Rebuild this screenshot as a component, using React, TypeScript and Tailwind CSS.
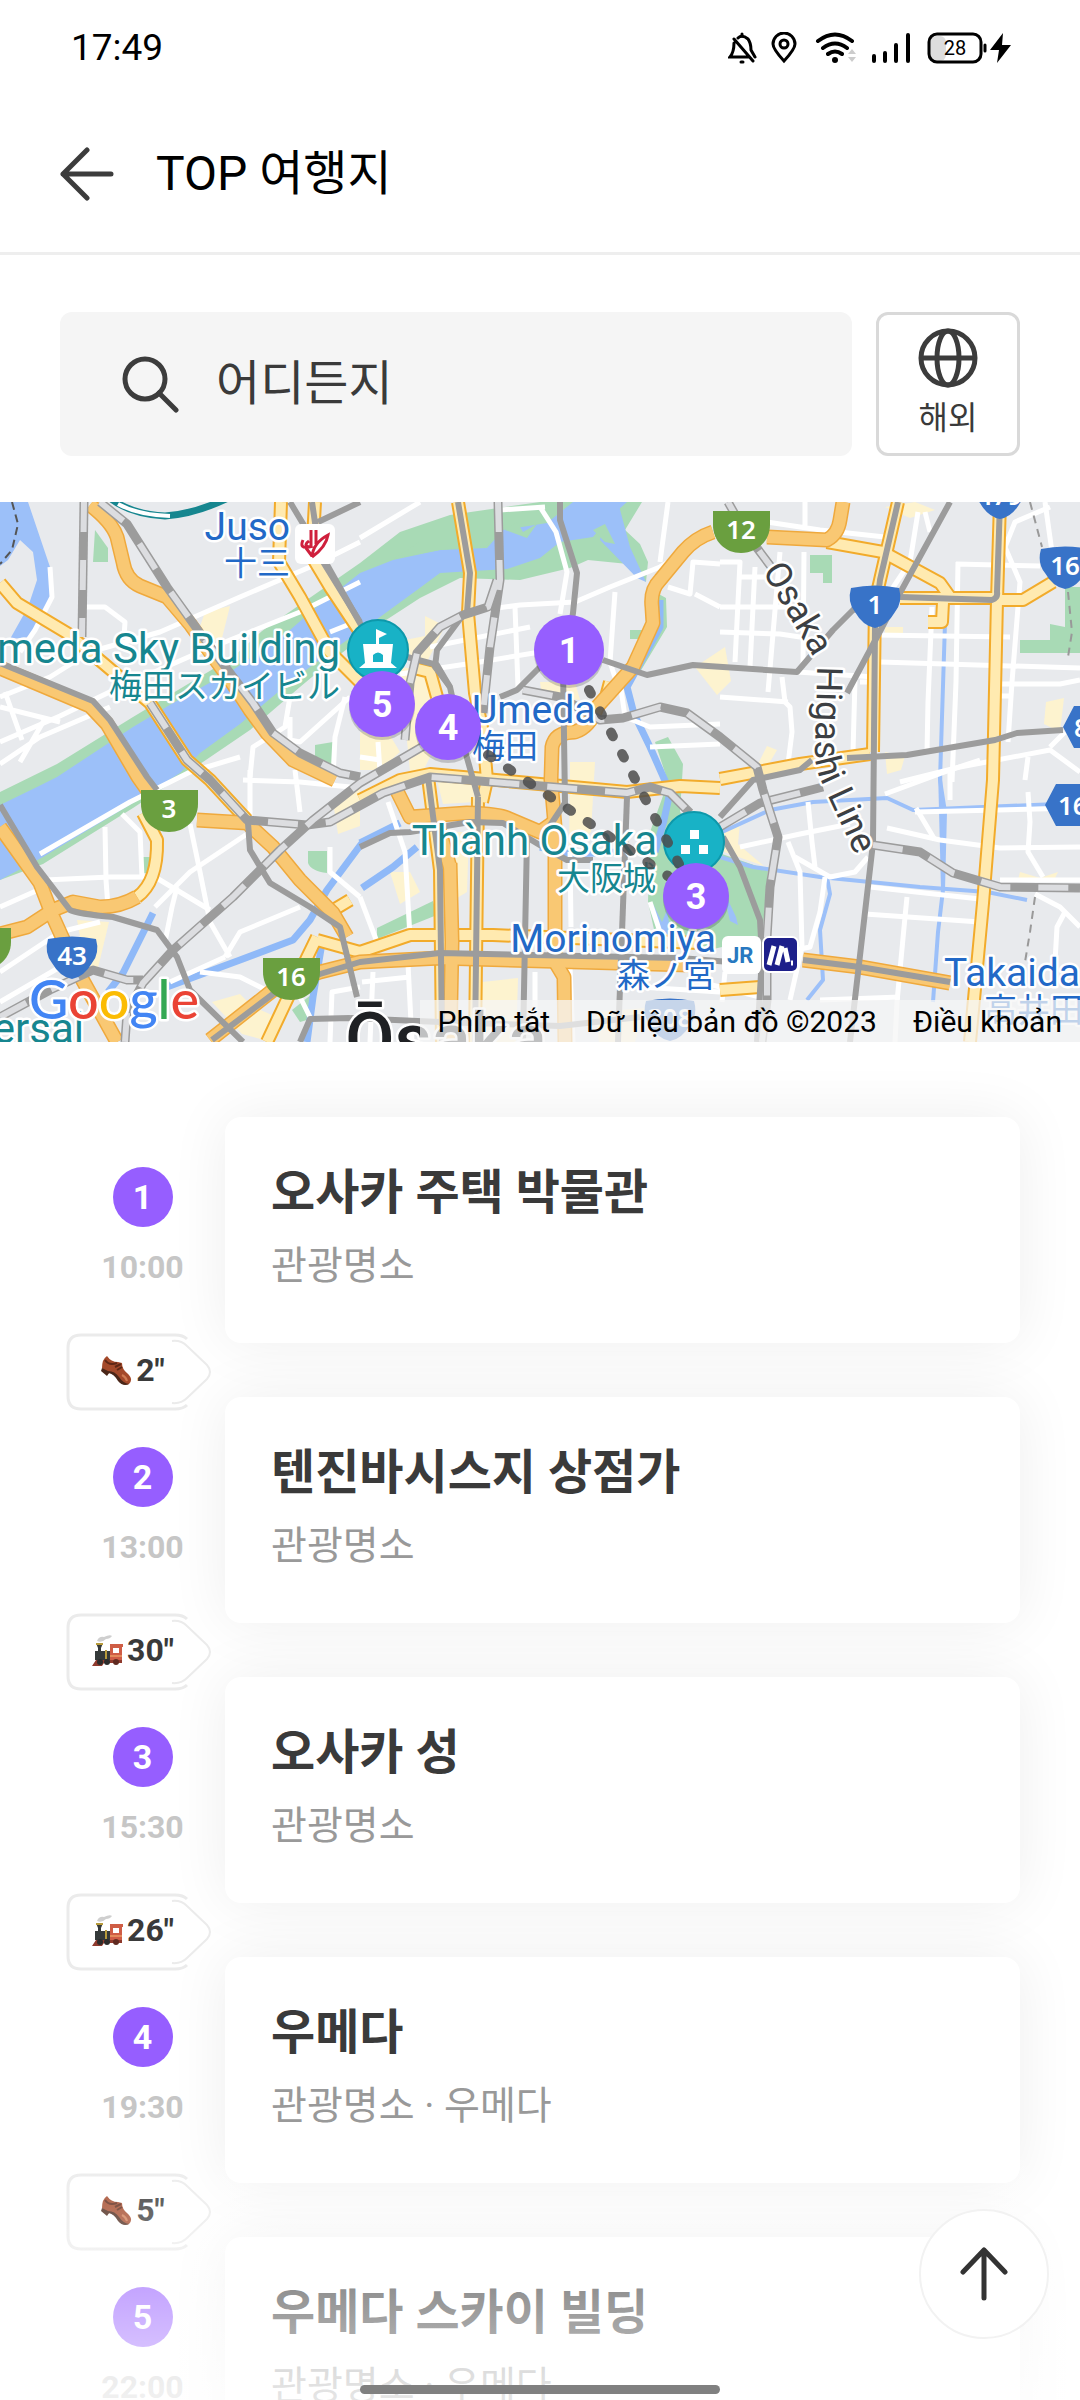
import React from "react";

type Stop = { id: number; name: string; sub: string; time: string; move?: "walk" | "train"; mins?: number };

const stops: Stop[] = [
  { id: 1, name: "오사카 주택 박물관", sub: "관광명소", time: "10:00", move: "walk", mins: 2 },
  { id: 2, name: "텐진바시스지 상점가", sub: "관광명소", time: "13:00", move: "train", mins: 30 },
  { id: 3, name: "오사카 성", sub: "관광명소", time: "15:30", move: "train", mins: 26 },
  { id: 4, name: "우메다", sub: "관광명소 · 우메다", time: "19:30", move: "walk", mins: 5 },
  { id: 5, name: "우메다 스카이 빌딩", sub: "관광명소 · 우메다", time: "22:00" },
];

// Map geometry, drawn on a 1080 x 540 canvas
const parks = [
  "M0,378 L0,290 L57,262 L133,215 L233,155 L262,129 L360,61 L400,30 L450,13 L540,0 L642,0 L625,28 L640,42 L648,60 L646,80 L628,62 L588,58 L570,66 L520,78 L460,76 L420,96 L380,122 L330,160 L300,185 L250,228 L200,262 L133,306 L43,362 Z",
  "M95,28 L108,46 L108,60 L93,60 Z",
  "M315,243 L333,240 L333,262 L315,260 Z",
  "M810,53 h22 v28 h-9 v-10 h-13 z",
  "M1020,138 h30 v-16 l15,3 v-40 h15 v66 h-60 z",
  "M308,349 h19 v22 q-16,-2 -19,-10 z",
  "M143,355 h7 v16 h-7 z",
  "M377,426 L433,399 L437,413 L377,437 Z",
  "M292,508 l20,-16 l2,24 l-14,4 z",
  "M650,330 L668,280 L655,240 L668,235 L683,262 L680,310 L722,352 L768,368 L762,436 L700,450 L655,432 L648,400 Z",
  "M655,90 L666,96 L667,125 L640,170 L632,165 L655,120 Z",
  "M630,128 h12 v9 h-12 z",
];
const waters = [
  "M0,303 L37,285 L57,275 L133,225 L173,201 L233,168 L290,128 L313,108 L360,71 L393,58 L440,48 L487,46 L503,28 L547,21 L573,0 L627,0 L607,18 L593,35 L560,40 L540,56 L507,67 L440,71 L417,88 L380,115 L330,150 L290,180 L240,222 L200,251 L180,271 L133,301 L43,355 L0,378 Z",
  "M0,0 L28,0 L50,65 L50,95 L30,135 L10,137 L28,105 L37,78 L33,50 L20,38 L8,58 L0,64 Z",
  "M605,0 L618,0 L630,45 L646,80 L637,76 L600,38 Z",
  "M652,400 l10,20 l5,-12 l3,20 l-5,8 l-12,-20 z",
  "M722,385 l14,30 l2,8 l-8,-4 z",
];
const canals = [
  "M660,98 L660,125 L627,185 L634,212 L650,245 L670,290 L664,318 L655,350",
  "M153,411 L123,471 L108,490",
  "M362,341 L327,388 L310,418 L293,438 L240,458 L167,485",
  "M323,435 L313,495 L307,540",
  "M360,341 L400,321",
  "M362,386 L393,365 L417,345",
  "M540,345 L570,352 L620,350",
];
const streams = [
  "M720,355 L753,365 L820,375 L920,385 L987,390 L1027,398",
  "M720,331 L770,308 L813,300 L887,296 L913,308 L1080,301",
  "M827,375 L830,392 L820,428 L823,478 L807,498",
  "M945,121 L940,278 L945,310 L943,388 L938,430 L933,500",
  "M940,268 L943,388",
];
const blocks = [
  "M205,110 l25,-6 l-8,32 l-30,12 z",
  "M395,140 l30,-6 l0,-20 l20,10 l-20,40 z",
  "M360,230 l28,0 l12,20 l-20,18 l-20,0 z",
  "M400,165 l35,5 l15,45 l-30,60 l-10,-5 z",
  "M540,180 l35,0 l5,18 l-38,-4 z",
  "M570,260 l25,0 l-4,70 l-22,20 z",
  "M695,165 l30,-20 l6,34 l-14,14 z",
  "M885,5 l30,-5 l20,8 l-25,8 z",
  "M885,125 h18 v8 h-18 z",
  "M885,250 l20,4 l-4,14 l-14,4 z",
  "M767,244 l10,4 l-14,24 l-8,-4 z",
  "M1046,200 l18,-4 l-4,34 l-16,-8 z",
  "M722,330 l18,-10 l-2,22 l26,22 l-40,-14 z",
  "M1020,370 l20,6 l18,-6 l-4,8 l-36,0 z",
  "M77,418 l32,2 l-12,50 l-12,-8 z",
  "M212,500 l28,-8 l12,12 l22,10 l-10,24 l-22,-6 z",
  "M333,300 l27,-20 l0,44 l-22,8 z",
  "M390,370 l20,0 l10,20 l-20,12 z",
  "M455,330 l14,0 l-2,60 l-10,6 z",
  "M482,480 l36,-4 l-2,64 l-34,0 z",
  "M435,270 l36,0 l4,30 l-32,2 z",
  "M595,510 l50,-4 l-10,34 l-36,0 z",
];
const minor = [
  "M0,240 L60,214 L120,185 L200,150 L300,110 L360,80",
  "M84,105 L105,105 L125,120 L124,135",
  "M50,65 L52,95 L35,128 L20,150",
  "M0,195 L50,175 L90,150 L160,130 L240,95 L310,65 L360,40",
  "M360,36 L420,0 M0,262 L40,235 L110,205 M5,190 L22,238 M0,205 L60,220 M46,215 L20,260",
  "M40,352 L130,300 L190,270 L240,255 M0,405 L45,385",
  "M45,378 L110,375 L155,375 L180,390 L210,408",
  "M105,325 L106,378 L108,405",
  "M122,312 L140,330 L142,375",
  "M190,322 L200,370 L210,420 L230,455",
  "M155,405 L190,370 L250,330",
  "M177,385 L172,405 L165,440",
  "M243,278 L300,280 L350,285 M250,268 L250,315 M295,268 L300,310",
  "M225,455 L240,430 L300,405",
  "M0,470 L60,430 L100,420 M0,500 L60,465",
  "M170,480 L225,455 M200,470 L240,475 L270,490",
  "M250,275 L253,245 L285,225 L290,195 M290,215 L290,238 L300,240 L350,195",
  "M333,276 L335,235 L345,195",
  "M330,345 L330,370 L360,395",
  "M360,118 L330,130 M483,108 L520,103 L575,100 L610,85 L660,65 L720,30",
  "M515,105 L518,185 M400,172 L480,160 L540,150 M430,145 L530,125",
  "M540,5 L556,30 L567,70 L560,112",
  "M500,8 L545,5 M668,0 L660,60",
  "M615,90 L610,160 L618,185",
  "M668,85 L690,92 L693,60 L720,62 M695,92 L720,105",
  "M360,255 L380,258 M378,240 L380,270",
  "M620,180 L625,215 L650,225 L720,222 M650,245 L720,242",
  "M720,60 L740,60 L735,160 M755,65 L750,165 M780,50 L768,190",
  "M767,20 L820,28 L885,35 M805,0 L805,25 M720,105 L800,105 M740,75 L765,75",
  "M720,130 L780,132 L800,135 M804,50 L803,165 M782,175 L785,200 L790,205 L792,230 L788,262",
  "M720,195 L788,200 M797,170 L875,175",
  "M918,10 L910,60 L890,90 M925,10 L930,30",
  "M932,105 L928,200 L927,250 M958,60 L956,180 L952,280 M956,62 L1040,64",
  "M875,133 L1010,135 M880,160 L1080,166 M1000,182 L1060,182 L1080,178 M997,194 L1010,194",
  "M1050,5 L1015,20 L1005,45 L1020,80 L1012,180 L1008,240",
  "M1045,0 L1052,50",
  "M855,178 L853,250 M860,180 L875,180",
  "M900,280 L960,265 L1050,248 L1080,270 M1028,255 L1025,278 M1065,230 L1050,245",
  "M740,345 L800,332 L850,322 M885,292 L950,268 L980,258 M950,268 L950,298",
  "M808,300 L812,340 L815,365 M788,340 L800,370 L802,445 L790,498",
  "M795,355 L830,375 L855,370 L868,355",
  "M825,375 L820,410 L810,445 L795,448",
  "M887,326 L940,338 L1000,346 L1080,345 M915,310 L1080,306",
  "M916,306 L935,338",
  "M870,385 L980,397 M865,412 L980,420 M907,395 L905,415 L897,500 L895,540",
  "M1028,290 L1030,320 L1028,350 L1043,375",
  "M1000,378 L1080,378 M1035,392 L1060,405 L1080,425 M1065,410 L1057,425 L1055,460",
  "M535,470 L535,540 M570,350 L571,425 M650,400 L660,430 M570,465 L573,540",
  "M388,300 L405,350 L410,435 M360,395 L377,440 M373,470 L370,540 M408,462 L412,540 M362,480 L410,475",
  "M700,480 L760,495 M640,485 L720,490 M725,470 L722,500",
  "M820,498 L900,495",
  "M330,540 L332,490 L360,485 M300,495 L310,515",
];
const highways = [
  "M90,3 Q112,20 117,35 L123,60 Q126,78 140,84 L167,95 L190,122 L233,182 L250,208 L267,231 L293,258 L335,278",
  "M0,166 L90,204 L107,222 L138,275 L150,292",
  "M137,395 Q120,405 100,405 L73,400 L53,408 L27,425 L0,432",
  "M0,325 L40,381 L53,415 L77,468 L117,540",
  "M197,318 L247,321 L273,345 L300,378 L333,411 L347,435",
  "M210,538 L277,485 L320,470 L360,460 L440,456 L690,463 M803,458 L860,465 L950,481",
  "M450,361 L452,440 L450,540",
  "M713,30 Q695,36 683,50 L660,78 Q650,88 652,105 L653,121 L633,165 L597,205 Q590,225 575,230 Q555,230 552,245 L551,278 L555,325 L555,460 L564,475 L565,540",
  "M395,285 L410,315 L467,311 Q500,312 507,316 L540,330 L557,318",
  "M437,320 L450,365",
  "M767,35 L827,38 Q838,32 840,18 L843,0",
];
const yellows = [
  "M0,81 L17,101 L67,131 L103,161 L150,201 L187,258 L210,278 L247,318",
  "M143,311 L157,338 Q158,380 137,395",
  "M317,435 L300,470 L267,540 M317,438 L360,450 L410,433 L493,433 L700,441",
  "M281,0 L279,60 L300,95 L330,150 L360,180",
  "M315,0 L312,55 L330,85 L360,130",
  "M458,0 L470,71 L468,111 L475,191 L483,231 L487,278 L482,300",
  "M360,298 L400,278 L430,272 L627,290 L680,284 L720,286",
  "M410,165 L430,170 L437,195",
  "M827,40 L883,50 L940,81 L950,95",
  "M898,0 L880,78 L875,100 L873,250",
  "M900,96 L997,96 M928,120 L942,120 L943,100",
  "M1000,0 L997,98 L1023,98 L1053,80 M997,98 L993,278 L983,401 L970,540",
  "M720,277 L800,262 L870,252",
  "M330,410 L350,398 M610,180 L606,195",
  "M428,275 L440,368 L442,540 M478,295 L475,540",
  "M760,485 L720,488",
];
const rails = [
  "M0,161 L93,199 L110,218 L147,275 L157,288",
  "M0,303 L37,365 L70,408 Q78,412 113,415 L157,428 L177,455 L190,488 L243,540",
  "M248,321 L250,348 L270,381 L310,405 L340,425 L357,495",
  "M212,538 L277,489 L320,472 L360,460 L440,451 L680,456 L730,460",
  "M300,540 L310,517 L350,516 M350,516 L440,520 L560,524 L640,515",
  "M428,275 L440,368 L442,540 M478,295 L475,540 M527,335 L523,540",
  "M360,345 L390,331 L410,330 L470,320 L503,321 L543,345 L567,358 L593,358",
  "M560,0 L560,18 L577,71 L573,111 L563,165 L565,301 L547,328",
  "M627,295 L618,540",
  "M458,0 L470,71 L467,111",
  "M463,113 L437,148 L435,165 L450,185 L460,231 L478,295",
  "M407,155 L437,163 L450,185",
  "M540,165 L517,188 L500,195",
  "M603,158 L647,173 L693,163 L797,170 L833,128 L853,108 L880,100",
  "M720,315 L753,278 L800,268 L812,258 M723,335 L740,365 L760,418 L762,455 L757,540",
  "M898,0 L880,78 L875,120",
  "M900,95 L992,98 Q998,96 997,90 L1000,0",
  "M875,125 L873,341 L850,540",
  "M950,0 L900,91 L877,135 L847,191",
  "M847,256 L907,253 L995,238 L1017,231 L1063,228",
  "M803,458 L860,465 L950,480",
  "M312,0 L320,55 L360,120 M290,0 L308,30 M318,20 L360,0",
  "M317,45 L365,130",
];
const striped = [
  "M84,0 L82,135",
  "M100,0 L127,22 L167,85 L200,131 L233,175 L253,201 L273,231 L300,251 L340,271 L360,275",
  "M150,201 L187,258 L210,278 L247,318 L307,323 L330,320 L383,291 L430,275 L627,291 L650,285 L670,291 L690,311",
  "M427,242 L360,281 L313,318 L280,348 L233,395 L173,448 L143,481 L127,511 L125,540",
  "M0,515 L50,488 L93,468 L127,478 L143,478",
  "M498,0 L500,78 L490,145 L483,211",
  "M497,78 L488,105 L463,113 L440,125 L417,151 L410,181 L405,238",
  "M523,188 L560,195 L600,218 L623,216 L660,205 L687,211 L720,235 L757,265 L763,288 L778,335 L770,385 L767,435 L767,498 L762,540",
  "M720,325 L760,301 L823,285",
  "M873,343 L920,350 L953,371 L1000,385 L1080,386",
  "M728,0 L745,30 L775,70",
];

const halo = "stroke-white [paint-order:stroke] [stroke-linejoin:round] stroke-[5px]";
const station = "font-[Roboto,sans-serif] text-[39px] fill-[#2269c7]";
const sight = "font-[Roboto,sans-serif] text-[42px] fill-[#16868f]";
const kana = "font-['Noto_Sans_CJK_JP',sans-serif] text-[33px]";
const teal = "fill-[#16868f]";
const blue = "fill-[#2269c7]";

function GreenShield({ x, y, label }: { x: number; y: number; label?: string }) {
  return (
    <g transform={`translate(${x} ${y})`}>
      <path d="M0,0 H57 V14 C57,30 44,42 28,42 S0,30 0,14 Z" fill="#6a9f3f" />
      {label && <text x="28" y="28" textAnchor="middle" className="fill-white font-['Noto_Sans',sans-serif] text-[26px] font-semibold">{label}</text>}
    </g>
  );
}

function BlueShield({ x, y, label }: { x: number; y: number; label: string }) {
  return (
    <g transform={`translate(${x} ${y})`}>
      <path d="M2,2 Q26,-3 50,2 Q54,16 46,26 Q38,40 26,42 Q14,40 6,26 Q-2,16 2,2 Z" fill="#3873c8" />
      <text x="26" y="28" textAnchor="middle" className="fill-white font-['Noto_Sans',sans-serif] text-[26px] font-semibold">{label}</text>
    </g>
  );
}

function Pin({ x, y, r, label }: { x: number; y: number; r: number; label: string }) {
  return (
    <g>
      <circle cx={x} cy={y + 3} r={r} fill="#000" opacity=".18" />
      <circle cx={x} cy={y} r={r} fill="#965eff" />
      <text x={x} y={y + 13} textAnchor="middle" className="fill-white font-[Roboto,sans-serif] text-[36px] font-bold">{label}</text>
    </g>
  );
}

function CityMap() {
  return (
    <svg viewBox="0 0 1080 540" preserveAspectRatio="xMidYMid slice" className="block h-full w-full" role="img" aria-label="Osaka">
      <rect width="1080" height="540" fill="#e8eaed" />
      {blocks.map((d) => <path key={d} d={d} fill="#fdf3cf" />)}
      {parks.map((d) => <path key={d} d={d} fill="#a8dab5" />)}
      {waters.map((d) => <path key={d} d={d} fill="#9cc0f9" />)}
      <path d="M392,57 L420,40 L470,30 L500,30 L486,44 L440,48 Z M505,28 l12,-8 l6,10 l14,-8 l-10,14 z M593,28 l12,-6 l10,20 l-10,-2 z" fill="#a8dab5" />
      <g fill="none" strokeLinejoin="round">
        {canals.map((d) => <path key={d} d={d} stroke="#8fb9f8" strokeWidth="7" />)}
        {streams.map((d) => <path key={d} d={d} stroke="#9cc0f9" strokeWidth="4" />)}
        {minor.map((d) => <path key={d} d={d} stroke="#fff" strokeWidth="5" />)}
        <path d="M110,-4 Q130,12 165,14 Q195,12 228,-4" stroke="#16868f" strokeWidth="7" />
        <path d="M118,2 Q138,13 170,14" stroke="#fff" strokeWidth="4" />
        <path d="M12,0 L18,22 L12,48 L0,62" stroke="#555" strokeWidth="2" strokeDasharray="8 5" />
        <path d="M1030,0 L1042,45 M1068,90 L1072,130 L1068,155 M1035,395 L1030,430 L1025,460" stroke="#999" strokeWidth="2" strokeDasharray="8 6" />
        {yellows.map((d) => <path key={d} d={d} stroke="#f2ab2b" strokeWidth="14" />)}
        {yellows.map((d) => <path key={d} d={d} stroke="#ffeab0" strokeWidth="10" />)}
        {highways.map((d) => <path key={d} d={d} stroke="#efa93d" strokeWidth="15" />)}
        {highways.map((d) => <path key={d} d={d} stroke="#f9c873" strokeWidth="12" />)}
        {rails.map((d) => <path key={d} d={d} stroke="#9c9c9c" strokeWidth="6" />)}
        {striped.map((d) => <path key={d} d={d} stroke="#9c9c9c" strokeWidth="9" />)}
        {striped.map((d) => <path key={d} d={d} stroke="#dcdde0" strokeWidth="6" strokeDasharray="30 28" />)}
      </g>

      <GreenShield x={713} y={9} label="12" />
      <GreenShield x={141} y={288} label="3" />
      <GreenShield x={263} y={456} label="16" />
      <GreenShield x={-46} y={426} />
      <BlueShield x={849} y={84} label="1" />
      <BlueShield x={46} y={435} label="43" />
      <BlueShield x={974} y={-25} label="479" />
      <BlueShield x={1039} y={45} label="16" />
      <BlueShield x={644} y={497} label="308" />
      <path d="M1063,225 L1074,204 H1080 V246 H1074 Z M1045,303 L1056,282 H1080 V324 H1056 Z" fill="#3873c8" />
      <g className="fill-white font-['Noto_Sans',sans-serif] text-[26px] font-semibold">
        <text x="1074" y="235">8</text>
        <text x="1058" y="313">16</text>
      </g>

      <circle cx="378" cy="148" r="30" fill="#18b2c6" stroke="#0d98ab" strokeWidth="2" />
      <path d="M376,142 V127 l11,5 l-8,4 v6 h14 l-2,19 l6,5 h-38 l6,-5 l-2,-19 z M373,160 h10 v-7 q-5,-5 -10,0 z" fill="#fff" fillRule="evenodd" />
      <circle cx="694" cy="340" r="30" fill="#18b2c6" stroke="#0d98ab" strokeWidth="2" />
      <path d="M690,328 h9 v9 h-9 z M681,343 h9 v9 h-9 z M699,343 h9 v9 h-9 z" fill="#fff" />

      <g className={halo}>
        <text x="290" y="38" textAnchor="end" className={station}>Juso</text>
        <text x="290" y="73" textAnchor="end" className={`${kana} ${blue}`}>十三</text>
        <text x="340" y="161" textAnchor="end" className={sight}>Umeda Sky Building</text>
        <text x="340" y="196" textAnchor="end" className={`${kana} ${teal}`}>梅田スカイビル</text>
        <text x="472" y="221" className={station}>Umeda</text>
        <text x="472" y="256" className={`${kana} ${blue}`}>梅田</text>
        <text x="657" y="353" textAnchor="end" className={sight}>Thành Osaka</text>
        <text x="656" y="388" textAnchor="end" className={`${kana} ${teal}`}>大阪城</text>
        <text x="716" y="450" textAnchor="end" className={station}>Morinomiya</text>
        <text x="716" y="485" textAnchor="end" className={`${kana} ${blue}`}>森ノ宮</text>
        <text x="944" y="484" className={station}>Takaida</text>
        <text x="984" y="520" className={`${kana} ${blue}`}>高井田</text>
        <text x="84" y="541" textAnchor="end" className={sight}>Universal</text>
        <text x="345" y="562" className="fill-[#1f2124] font-[Roboto,sans-serif] text-[72px] font-medium">Ōsaka</text>
        <path id="line-label" d="M762,69 L808,146 Q817,160 817,176 L815,250 Q815,266 822,281 L864,372" fill="none" stroke="none" />
        <text className="fill-[#3c3f43] font-[Roboto,sans-serif] text-[36px]">
          <textPath href="#line-label">Osaka Higashi Line</textPath>
        </text>
        <text x="29" y="517" className="font-[Lato,sans-serif] text-[54px] font-medium">
          <tspan fill="#4285f4">G</tspan>
          <tspan fill="#ea4335">o</tspan>
          <tspan fill="#fbbc04">o</tspan>
          <tspan fill="#4285f4">g</tspan>
          <tspan fill="#34a853">l</tspan>
          <tspan fill="#ea4335">e</tspan>
        </text>
      </g>

      <rect x="295" y="22" width="40" height="40" rx="6" fill="#fff" />
      <path d="M311,28 v18 M316,28 v14 M303,38 q-4,9 6,7 q-6,-2 0,-6 M312,55 q1,-14 16,-22 q-2,12 -16,22 M306,46 l6,8" fill="none" stroke="#cf1f3c" strokeWidth="3" />
      <rect x="722" y="434" width="39" height="38" rx="6" fill="#fff" />
      <text x="727" y="461" className="fill-[#2878c0] font-[Roboto,sans-serif] text-[22px] font-bold">JR</text>
      <rect x="763" y="435" width="35" height="35" rx="6" fill="#1d1f8a" stroke="#fff" strokeWidth="2" />
      <path d="M769,463 l5,-19 M777,463 l5,-19 M785,446 l3,14 M791,461 h2" stroke="#fff" strokeWidth="5" />

      <path d="M589,188 L680,364 M488,253 L668,374" stroke="#4d4d4d" strokeWidth="10" strokeLinecap="round" strokeDasharray="4 20" opacity=".85" />
      <Pin x={569} y={148} r={35} label="1" />
      <Pin x={382} y={202} r={33} label="5" />
      <Pin x={448} y={225} r={33} label="4" />
      <Pin x={696} y={394} r={33} label="3" />
    </svg>
  );
}

function StatusIcons() {
  return (
    <svg width="284" height="32" viewBox="728 32 284 32" fill="none" stroke="#000" strokeWidth="3" strokeLinecap="round" aria-hidden="true">
      <path d="M738,38 Q742,34 748,39 Q751,43 751,50 L755,57 M734,43 Q734,52 730,57 H748 M734,39 L753,61" />
      <path d="M742,34 v2 M741,62 h2" />
      <path d="M784,61 Q773,49 773,44 A11,11 0 0 1 795,44 Q795,49 784,61 Z" />
      <circle cx="784" cy="44" r="4" />
      <path d="M818,41 Q835,28 852,41 M823,48 Q835,39 847,48 M828,54 Q835,49 842,54" strokeWidth="4" />
      <circle cx="835" cy="60" r="3" fill="#000" stroke="none" />
      <path d="M848,54 l4,-5 l4,5 z M848,57 l4,5 l4,-5 z" fill="#ccc" stroke="none" />
      <path d="M874,56 V61 M885,53 V61 M896,45 V61 M908,35 V61" strokeWidth="4" />
      <rect x="930" y="36" width="16" height="25" rx="6" fill="#ddd" stroke="none" />
      <rect x="929" y="34" width="52" height="28" rx="8" />
      <path d="M985,45 v6" />
      <text x="955" y="55" textAnchor="middle" className="fill-black stroke-none font-[Roboto,sans-serif] text-[20px]">28</text>
      <path d="M1003,33 L990,50 H999 L997,63 L1011,45 H1002 Z" fill="#000" stroke="none" />
    </svg>
  );
}

function Shoe() {
  return (
    <svg width="31" height="31" viewBox="0 0 31 31" aria-hidden="true">
      <path d="M1,13 Q1,4 6,1 Q10,7 17,7 L21,8 Q21,14 26,18 Q33,24 28,29 Q22,31 17,25 Q13,19 9,18 L6,19 Z" fill="#a4492a" />
      <path d="M1,13 L0,16 L6,21 L8,18 Q13,19 17,26 Q22,32 28,29 Q22,28 18,22 Q14,16 7,16 Z" fill="#4a2618" />
      <path d="M4,5 Q8,11 16,8 M14,12 L20,9 M16,15 L21,12" stroke="#5e2716" strokeWidth="2" fill="none" />
      <path d="M21,20 Q25,22 26,26" stroke="#d07a52" strokeWidth="2" fill="none" />
    </svg>
  );
}

function Train() {
  return (
    <svg width="31" height="31" viewBox="0 0 31 31" aria-hidden="true">
      <path d="M5,6 Q7,1 12,2 Q18,-1 20,1 Q18,4 14,4 Q10,8 5,6 Z" fill="#cfcfcf" />
      <path d="M4,8 H11 L9,13 V16 H19 V25 H3 V16 H6 V13 Z" fill="#353a3a" />
      <path d="M4,8 h7 v2 h-7 z M13,15 h2 v9 h-2 z" fill="#b79b3c" />
      <path d="M18,9 H31 V12 H30 V25 H18 Z" fill="#cf5d45" />
      <path d="M21,13 h6 v5 h-6 z" fill="#fff" />
      <path d="M18,20 h12 v2 h-12 z" fill="#e58b5c" />
      <path d="M0,31 L4,25 H30 V28 H12 L10,31 Z" fill="#8f3a2d" />
      <circle cx="8" cy="27" r="3" fill="#2c2c2c" />
      <circle cx="15" cy="27" r="3" fill="#2c2c2c" />
      <circle cx="24" cy="27" r="3" fill="#5f2a20" />
    </svg>
  );
}

function MoveBadge({ move, mins }: { move: "walk" | "train"; mins: number }) {
  return (
    <div className="absolute top-[216px] left-[6px] h-[78px] w-[146px]">
      <svg viewBox="0 0 146 78" className="absolute inset-0 h-full w-full" fill="#fff" stroke="#ebebeb" aria-hidden="true">
        <path d="M121,6 Q117,2 109,2 H15 Q2,2 2,15 V63 Q2,76 15,76 H109 Q117,76 121,72" strokeWidth="3" />
        <path d="M106,8 Q115,7 121,13 L141,32 Q147,39 141,46 L121,65 Q115,71 106,70" strokeWidth="2" />
      </svg>
      <div className="relative flex h-[74px] w-[134px] items-center justify-center gap-1 font-[Roboto,sans-serif] text-[32px] font-bold">
        {move === "walk" ? <Shoe /> : <Train />}
        <span>{mins}"</span>
      </div>
    </div>
  );
}

export default function App() {
  return (
    <div className="relative flex h-screen flex-col overflow-hidden bg-white font-[Roboto,'Noto_Sans_CJK_KR',sans-serif] text-[#3a3a3a]">
      <div className="flex h-24 shrink-0 items-center justify-between pr-[68px] pl-[71px]">
        <span className="text-[37px] text-black">17:49</span>
        <StatusIcons />
      </div>

      <header className="flex h-[159px] shrink-0 items-center gap-[42px] border-b-[3px] border-[#eeeeee] px-[60px]">
        <button aria-label="뒤로">
          <svg width="54" height="54" viewBox="0 0 54 54" fill="none" stroke="#3c3c3c" strokeWidth="5" strokeLinecap="round" strokeLinejoin="round">
            <path d="M27,3 L3,27 L27,51 M3,27 H51" />
          </svg>
        </button>
        <h1 className="text-[48px] text-black">TOP 여행지</h1>
      </header>

      <div className="flex shrink-0 gap-6 px-[60px] pt-[57px] pb-[46px]">
        <label className="flex h-36 min-w-0 flex-1 items-center gap-9 rounded-xl bg-[#f5f5f5] pl-[62px]">
          <svg width="58" height="58" viewBox="0 0 58 58" fill="none" stroke="#3c3c3c" strokeWidth="5" strokeLinecap="round" className="shrink-0">
            <circle cx="23" cy="24" r="20" />
            <path d="M37,38 L54,55" />
          </svg>
          <input aria-label="검색" defaultValue="어디든지" className="min-w-0 flex-1 bg-transparent text-[48px] outline-none" />
        </label>
        <button className="flex h-36 w-36 flex-col items-center justify-center gap-2 rounded-xl border-[3px] border-[#d9d9d9]">
          <svg width="60" height="60" viewBox="0 0 60 60" fill="none" stroke="#3c3c3c" strokeWidth="5">
            <circle cx="30" cy="30" r="27" />
            <ellipse cx="30" cy="30" rx="11" ry="27" />
            <path d="M3,30 H57" />
          </svg>
          <span className="text-[32px] leading-[44px]">해외</span>
        </button>
      </div>

      <section className="relative h-[540px] shrink-0 overflow-hidden">
        <CityMap />
        <div className="absolute right-0 bottom-0 flex h-[42px] items-center bg-[#f5f5f5]/75 text-[30px] text-black">
          <button className="px-[18px]">Phím tắt</button>
          <span className="px-[18px]">Dữ liệu bản đồ ©2023</span>
          <a href="#terms" className="px-[18px]">Điều khoản</a>
        </div>
      </section>

      <ol className="flex min-h-0 flex-1 flex-col gap-[54px] px-[60px] pt-[75px]">
        {stops.map((s) => (
          <li key={s.id} className="relative flex h-[226px] shrink-0">
            <div className="relative z-10 flex w-[165px] shrink-0 flex-col items-center pt-[50px]">
              <span className="flex h-[60px] w-[60px] items-center justify-center rounded-full bg-[#965eff] text-[34px] font-bold text-white">{s.id}</span>
              <time className="mt-5 text-[32px] leading-[40px] font-bold text-[#c6c6c6]">{s.time}</time>
              {s.move && s.mins && <MoveBadge move={s.move} mins={s.mins} />}
            </div>
            <div className="min-w-0 flex-1 rounded-2xl bg-white px-[46px] pt-[46px] shadow-[0_0_60px_rgba(0,0,0,0.07)]">
              <h2 className="text-[48px] leading-[60px] font-bold">{s.name}</h2>
              <p className="mt-[18px] text-[39px] leading-[50px] text-[#999999]">{s.sub}</p>
            </div>
          </li>
        ))}
      </ol>

      <div className="pointer-events-none absolute inset-x-0 bottom-0 z-20 h-[270px] bg-linear-to-b from-white/0 to-white/75" />
      <button aria-label="맨 위로" className="absolute right-[31px] bottom-[61px] z-30 flex h-[130px] w-[130px] items-center justify-center rounded-full border-2 border-[#f2f2f2] bg-white">
        <svg width="48" height="54" viewBox="0 0 48 54" fill="none" stroke="#333" strokeWidth="5" strokeLinecap="round" strokeLinejoin="round">
          <path d="M24,51 V3 M3,25 L24,3 L45,25" />
        </svg>
      </button>
      <div className="absolute bottom-[6px] left-1/2 z-30 h-[9px] w-1/3 -translate-x-1/2 rounded-full bg-[#808080]" />
    </div>
  );
}
